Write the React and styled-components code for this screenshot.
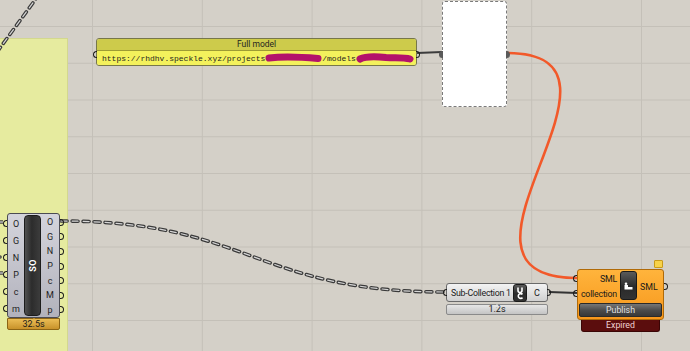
import React from 'react';
import styled, { createGlobalStyle } from 'styled-components';

const GlobalStyle = createGlobalStyle`
  html, body {
    margin: 0;
    padding: 0;
    background: #d4d0c8;
  }
  body {
    font-family: Roboto, "Liberation Sans", sans-serif;
  }
`;

const Canvas = styled.div`
  position: relative;
  width: 690px;
  height: 351px;
  overflow: hidden;
  background-color: #d4d0c8;
  background-image:
    linear-gradient(to right, #c4c0b8 1px, transparent 1px),
    linear-gradient(to bottom, #c4c0b8 1px, transparent 1px);
  background-size: 109.8px 100%, 100% 36.75px;
  background-position: 92px 0, 0 26px;
`;

const Group = styled.div`
  position: absolute;
  left: -2px;
  top: 38px;
  width: 68px;
  height: 320px;
  background: #e6eb9f;
  border: 1px solid #d3d88e;
`;

const Wires = styled.svg`
  position: absolute;
  left: 0;
  top: 0;
  width: 690px;
  height: 351px;
  overflow: visible;
`;

const Node = styled.div`
  position: absolute;
  left: ${(p) => p.$x}px;
  top: ${(p) => p.$y}px;
  width: ${(p) => p.$w}px;
  display: flex;
  flex-direction: column;
`;

// half-ring grip that sits on a node edge
const Grip = styled.span`
  position: absolute;
  top: ${(p) => (p.$top !== undefined ? `${p.$top}px` : '50%')};
  width: 3px;
  height: 5px;
  margin-top: -3.5px;
  border: 1.4px solid ${(p) => p.$fill || '#1c1c1c'};
  background: ${(p) => (p.$fill ? p.$fill : 'transparent')};
  z-index: 2;
  ${(p) =>
    p.$side === 'left'
      ? `left: ${-4 - (p.$shift || 0)}px; border-right: none; border-radius: 4px 0 0 4px;`
      : `right: ${-4 - (p.$shift || 0)}px; border-left: none; border-radius: 0 4px 4px 0;`}
`;

/* ---------- panel ---------- */

const Panel = styled(Node)`
  height: 28px;
  box-sizing: border-box;
  border: 1px solid #77774a;
  border-radius: 3px;
`;

const PanelHeader = styled.div`
  height: 11px;
  background: #cdcb4b;
  border-bottom: 1px solid #9e9c34;
  border-radius: 2px 2px 0 0;
  font-size: 8.5px;
  line-height: 11px;
  text-align: center;
  color: #1e1e1e;
`;

const PanelBody = styled.div`
  flex: 1;
  display: flex;
  align-items: center;
  padding-left: 5px;
  background: #f3f15c;
  border-radius: 0 0 2px 2px;
  font-family: "Liberation Mono", monospace;
  font-size: 8px;
  color: #1e1e1e;
  white-space: nowrap;
`;

const Redaction = styled.svg`
  display: block;
  flex-shrink: 0;
`;

const WhitePanel = styled(Node)`
  height: 106px;
  box-sizing: border-box;
  background: #ffffff;
  border: 1px dashed #7a7a7a;
  border-radius: 3px;
`;

/* ---------- SO component ---------- */

const SoBody = styled.div`
  display: flex;
  height: 105px;
  box-sizing: border-box;
  border: 1px solid #4b4b53;
  border-radius: 3px;
  background: linear-gradient(#d4d4dc, #b2b2bc);
`;

const ParamColumn = styled.div`
  display: flex;
  flex-direction: column;
  width: ${(p) => p.$w}px;
  padding-top: 1px;
`;

const ParamRow = styled.div`
  position: relative;
  height: ${(p) => p.$h}px;
  display: flex;
  align-items: center;
  justify-content: center;
  font-size: 9px;
  color: #1e1e1e;
`;

const Capsule = styled.div`
  width: 17px;
  margin: 1px 0;
  box-sizing: border-box;
  border: 1px solid #1c1c1c;
  border-radius: 4px;
  background: linear-gradient(90deg, #505050, #2c2c2c 45%, #3c3c3c);
  display: flex;
  align-items: center;
  justify-content: center;
`;

const CapsuleText = styled.span`
  writing-mode: vertical-rl;
  transform: rotate(180deg);
  color: #ffffff;
  font-weight: bold;
  font-size: 9px;
  letter-spacing: 0.5px;
`;

const TimeBar = styled.div`
  position: relative;
  box-sizing: border-box;
  height: ${(p) => (p.$tone === 'gold' ? 12 : 11)}px;
  margin-top: ${(p) => (p.$tone === 'gold' ? 0 : 2)}px;
  border: 1px solid ${(p) => (p.$tone === 'gold' ? '#8c6414' : '#8a8a8a')};
  border-radius: ${(p) => (p.$tone === 'gold' ? '0 0 2px 2px' : '2px')};
  background: ${(p) =>
    p.$tone === 'gold'
      ? 'linear-gradient(#ebbd55, #c8922a)'
      : 'linear-gradient(#e6e6e6, #c4c4c4)'};
  font-size: 9px;
  line-height: ${(p) => (p.$tone === 'gold' ? 10 : 9)}px;
  text-align: center;
  color: #1a1a1a;

  &::before {
    content: '';
    position: absolute;
    left: 50%;
    top: -4px;
    margin-left: -3px;
    border: 3px solid transparent;
    border-bottom-color: ${(p) => (p.$tone === 'gold' ? '#e6b44a' : '#e4e4e4')};
  }
`;

/* ---------- Sub-Collection ---------- */

const PlainBody = styled.div`
  position: relative;
  display: flex;
  align-items: center;
  height: 19px;
  box-sizing: border-box;
  border: 1px solid #6a6a6a;
  border-radius: 3px;
  background: linear-gradient(#f3f3f3, #d0d0d0);
`;

const NameLabel = styled.span`
  flex: 1;
  padding-left: 4px;
  font-size: 8.8px;
  letter-spacing: -0.25px;
  color: #1a1a1a;
  white-space: nowrap;
`;

const IconBox = styled.div`
  width: ${(p) => p.$w}px;
  height: ${(p) => p.$h}px;
  box-sizing: border-box;
  border: 1px solid #1a1a1a;
  border-radius: 3px;
  background: linear-gradient(#5a5a5a, #2a2a2a 55%, #333333);
  display: flex;
  align-items: center;
  justify-content: center;
  flex-shrink: 0;
`;

const OutLabel = styled.span`
  width: 20px;
  text-align: center;
  font-size: 9px;
  color: #1a1a1a;
`;

/* ---------- SML ---------- */

const OrangeBody = styled.div`
  position: relative;
  height: 51px;
  box-sizing: border-box;
  padding: 1px 1px 2px;
  border: 1px solid #b06a08;
  border-radius: 3px;
  background: linear-gradient(#ffb43c, #f7971c);
  display: flex;
  flex-direction: column;
`;

const SmlTop = styled.div`
  display: flex;
  height: 33px;
`;

const InputStack = styled.div`
  width: 41px;
  display: flex;
  flex-direction: column;
`;

const SmlRow = styled.div`
  position: relative;
  height: 15px;
  display: flex;
  align-items: center;
  justify-content: flex-end;
  padding-right: 3px;
  font-size: 8.8px;
  letter-spacing: -0.2px;
  color: #1a1a1a;
`;

const SmlOut = styled.div`
  position: relative;
  flex: 1;
  height: 15px;
  margin-top: 8px;
  display: flex;
  align-items: center;
  padding-left: 3px;
  font-size: 8.8px;
  color: #1a1a1a;
`;

const PublishButton = styled.div`
  height: 14px;
  margin-top: 1px;
  box-sizing: border-box;
  border: 1px solid #2a2a2a;
  border-radius: 2px;
  background: linear-gradient(#767676, #4a4a4a 55%, #383838);
  color: #e2e2e2;
  font-size: 8.8px;
  line-height: 12px;
  text-align: center;
`;

const ExpiredBar = styled.div`
  height: 12px;
  margin: 0 4px;
  box-sizing: border-box;
  background: #5b0d0d;
  border: 1px solid #3a0505;
  border-top: none;
  border-radius: 0 0 3px 3px;
  color: #f0d2d2;
  font-size: 8.8px;
  line-height: 11px;
  text-align: center;
`;

const Balloon = styled.span`
  position: absolute;
  top: -9px;
  right: 1px;
  width: 7px;
  height: 6px;
  background: #f7d24a;
  border: 1px solid #c89a1a;
  border-radius: 1px;
`;

const soInputs = ['O', 'G', 'N', 'P', 'c', 'm'];
const soOutputs = ['O', 'G', 'N', 'P', 'c', 'M', 'p'];

const DashedWire = ({ d }) => (
  <g fill="none" strokeLinecap="round">
    <path d={d} stroke="#3a3a3a" strokeWidth="3.6" strokeDasharray="6 5" />
    <path d={d} stroke="#d6d6d6" strokeWidth="1.2" strokeDasharray="6 5" />
  </g>
);

const DoubleStub = ({ y }) => (
  <g fill="none">
    <path d={`M-2 ${y} L3 ${y}`} stroke="#3a3a3a" strokeWidth="3.4" />
    <path d={`M-2 ${y} L3 ${y}`} stroke="#dcdcdc" strokeWidth="1.2" />
  </g>
);

const App = () => {
  return (
    <Canvas>
      <GlobalStyle />
      <Group />

      <Wires viewBox="0 0 690 351">
        <DashedWire d="M-3 52 Q 16 26 38 -4" />
        <DashedWire d="M61 221 C 250 221 255 292 445 292" />
        <DoubleStub y={222} />
        <DoubleStub y={273} />
        <DashedWire d="M-6 257 L 2 257" />
        <path d="M417 53 L 442 52" stroke="#3c3c3c" strokeWidth="2" fill="none" />
        <path
          d="M507 53 C 660 53 418 278 577 278"
          stroke="#f2592a"
          strokeWidth="2.6"
          fill="none"
        />
        <path d="M549 292 L 577 293" stroke="#333333" strokeWidth="2" fill="none" />
      </Wires>

      <Panel $x={96} $y={38} $w={321}>
        <Grip $side="left" $top={15} />
        <Grip $side="right" $top={15} />
        <PanelHeader>Full model</PanelHeader>
        <PanelBody>
          https://rhdhv.speckle.xyz/projects
          <Redaction width="57" height="12" viewBox="0 0 57 12">
            <path
              d="M4 6 C 16 4.5, 36 5, 53 6.5"
              stroke="#b3136b"
              strokeWidth="7"
              strokeLinecap="round"
              fill="none"
            />
          </Redaction>
          /models
          <Redaction width="58" height="12" viewBox="0 0 58 12">
            <path
              d="M4 7 C 10 4, 20 4.5, 30 5.5 C 40 6, 48 5, 54 7"
              stroke="#b3136b"
              strokeWidth="7"
              strokeLinecap="round"
              fill="none"
            />
          </Redaction>
        </PanelBody>
      </Panel>

      <WhitePanel $x={442} $y={1} $w={65}>
        <Grip $side="left" $top={52} $fill="#5a5a5a" />
        <Grip $side="right" $top={52} $fill="#5a5a5a" />
      </WhitePanel>

      <Node $x={7} $y={213} $w={53}>
        <SoBody>
          <ParamColumn $w={16}>
            {soInputs.map((n) => (
              <ParamRow key={n} $h={17}>
                <Grip $side="left" $shift={1} />
                {n}
              </ParamRow>
            ))}
          </ParamColumn>
          <Capsule>
            <CapsuleText>SO</CapsuleText>
          </Capsule>
          <ParamColumn $w={18}>
            {soOutputs.map((n) => (
              <ParamRow key={n} $h={14.8}>
                {n}
                <Grip $side="right" $shift={1} />
              </ParamRow>
            ))}
          </ParamColumn>
        </SoBody>
        <TimeBar $tone="gold">32.5s</TimeBar>
      </Node>

      <Node $x={446} $y={283} $w={102}>
        <PlainBody>
          <Grip $side="left" />
          <NameLabel>Sub-Collection 1</NameLabel>
          <IconBox $w={14} $h={18}>
            <svg width="10" height="14" viewBox="0 0 10 14">
              <path
                d="M3 1.5 V4.5 A2 2 0 0 0 7 4.5 V1.5"
                stroke="#fff"
                strokeWidth="1.6"
                fill="none"
              />
              <path
                d="M7.5 8.4 A2.4 2.4 0 1 0 7.5 11.6"
                stroke="#fff"
                strokeWidth="1.6"
                fill="none"
              />
            </svg>
          </IconBox>
          <OutLabel>C</OutLabel>
          <Grip $side="right" />
        </PlainBody>
        <TimeBar $tone="gray">1.2s</TimeBar>
      </Node>

      <Node $x={577} $y={269} $w={87}>
        <Balloon />
        <OrangeBody>
          <SmlTop>
            <InputStack>
              <SmlRow>
                <Grip $side="left" $shift={2} />
                SML
              </SmlRow>
              <SmlRow>
                <Grip $side="left" $shift={2} />
                collection
              </SmlRow>
            </InputStack>
            <IconBox $w={17} $h={29}>
              <svg width="11" height="10" viewBox="0 0 11 10">
                <path d="M1.5 4 H5 V6 H9.5 V8.5 H1.5 Z" fill="#fff" />
                <circle cx="3" cy="2.8" r="1.3" fill="#fff" />
              </svg>
            </IconBox>
            <SmlOut>
              SML
              <Grip $side="right" $shift={2} />
            </SmlOut>
          </SmlTop>
          <PublishButton>Publish</PublishButton>
        </OrangeBody>
        <ExpiredBar>Expired</ExpiredBar>
      </Node>
    </Canvas>
  );
};

export default App;
